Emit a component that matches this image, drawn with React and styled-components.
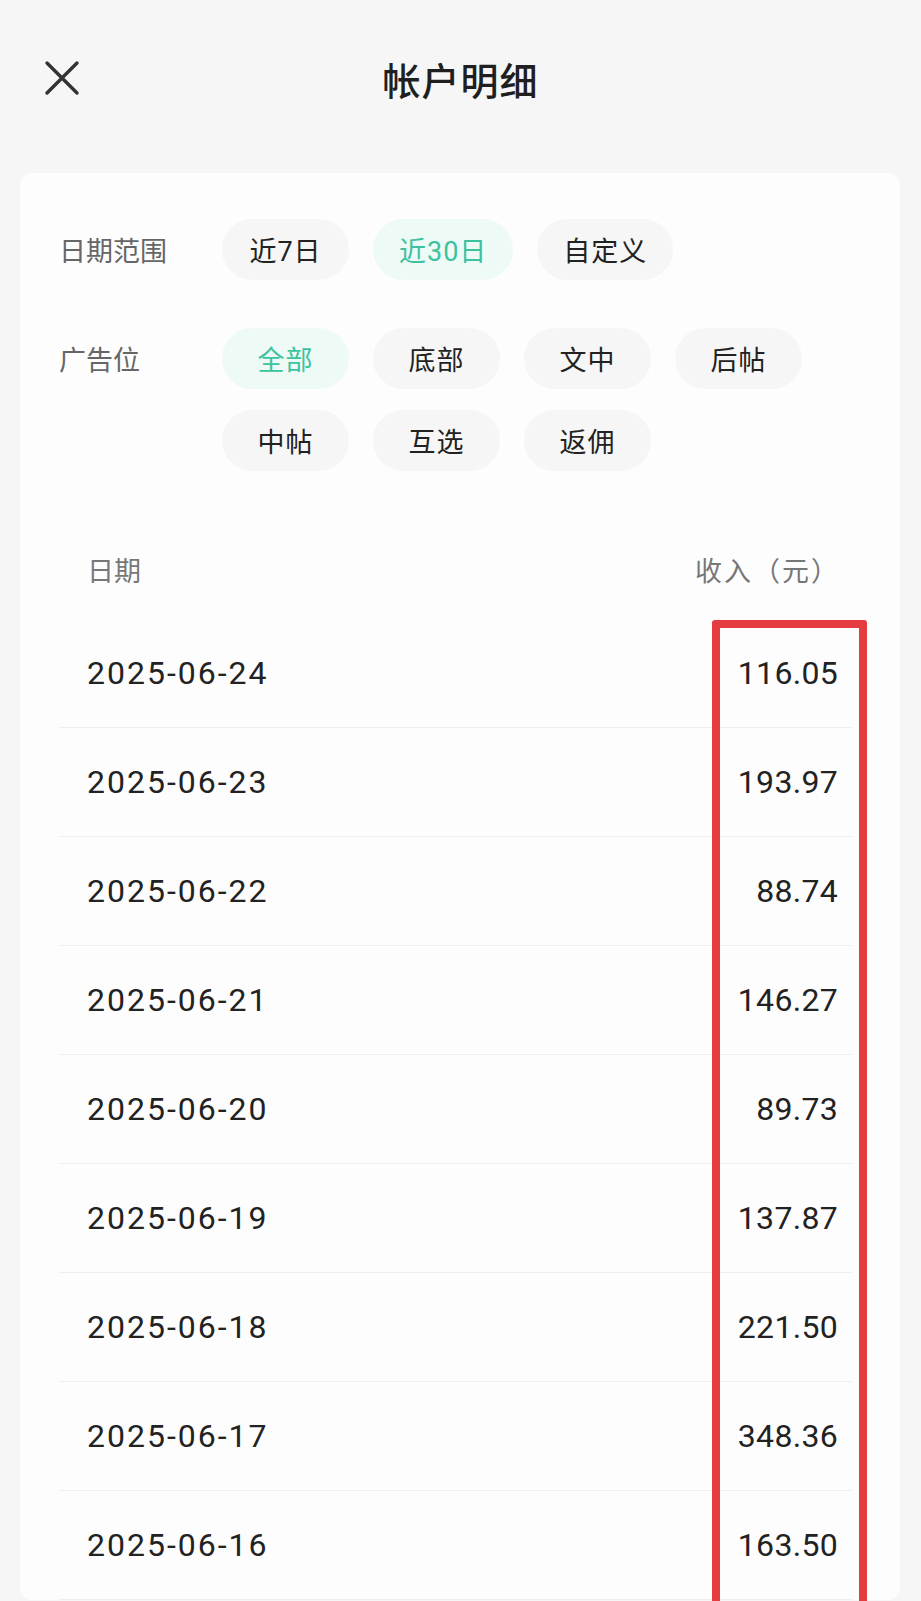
import React from 'react'
import styled, { createGlobalStyle } from 'styled-components';

const GlobalStyle = createGlobalStyle`
    html, body {
        margin: 0;
        padding: 0;
        background: #f6f6f6;
        overflow: hidden;
    }
    * {
        box-sizing: border-box;
    }
`;

const Page = styled.div`
    position: relative;
    width: 921px;
    height: 1601px;
    overflow: hidden;
    background: #f6f6f6;
    font-family: Roboto, "Noto Sans CJK SC", sans-serif;
    color: #222222;
`;
const Header = styled.div`
    position: relative;
    height: 156px;
    display: flex;
    align-items: center;
    justify-content: center;
`;
const CloseButton = styled.div`
    position: absolute;
    left: 44px;
    top: 60px;
    width: 36px;
    height: 36px;
    display: flex;
`;
const Title = styled.h1`
    margin: 0;
    font-family: "Noto Sans CJK SC", sans-serif;
    font-size: 38px;
    font-weight: 500;
    color: #1f1f1f;
    letter-spacing: 1px;
`;
const Card = styled.div`
    margin: 17px 21px 0 20px;
    background: #fdfdfd;
    border-radius: 12px;
    padding: 46px 48px 0 39px;
`;
const FilterGroup = styled.div`
    display: flex;
    align-items: flex-start;
    margin-bottom: 48px;
`;
const FilterLabel = styled.div`
    width: 163px;
    flex-shrink: 0;
    height: 61px;
    line-height: 61px;
    font-family: "Noto Sans CJK SC", sans-serif;
    font-size: 27px;
    color: #666666;
`;
const Chips = styled.div`
    display: flex;
    flex-wrap: wrap;
    gap: 21px 24px;
    width: 600px;
`;
const Chip = styled.div`
    min-width: 127px;
    height: 61px;
    padding: 0 26px;
    border-radius: 31px;
    display: flex;
    align-items: center;
    justify-content: center;
    font-size: 27px;
    letter-spacing: 1px;
    background: ${p => (p.$active ? '#edfaf6' : '#f6f6f6')};
    color: ${p => (p.$active ? '#3cc29f' : '#222222')};
`;
const Table = styled.div`
    margin-top: 3px;
`;
const HeadRow = styled.div`
    display: flex;
    justify-content: space-between;
    align-items: center;
    height: 100px;
    padding: 0 12px 0 28px;
    font-family: "Noto Sans CJK SC", sans-serif;
    font-size: 27px;
    color: #777777;
`;
const HeadCell = styled.span`
    letter-spacing: ${p => (p.$wide ? '2px' : '0')};
`;
const Row = styled.div`
    display: flex;
    justify-content: space-between;
    align-items: center;
    height: 109px;
    padding: 0 14px 0 28px;
    border-bottom: 1px solid #eeeeee;
    font-size: 32px;
    color: #222222;
`;
const DateCell = styled.span`
    letter-spacing: 2px;
`;
const Amount = styled.span`
    letter-spacing: 0.3px;
`;
const Highlight = styled.div`
    position: absolute;
    left: 712px;
    top: 620px;
    width: 155px;
    height: 1100px;
    border: 8px solid #e53d3f;
    border-radius: 3px;
    pointer-events: none;
`;

const dateOptions = [
    { label: '近7日' },
    { label: '近30日', active: true },
    { label: '自定义' },
];
const slotOptions = [
    { label: '全部', active: true },
    { label: '底部' },
    { label: '文中' },
    { label: '后帖' },
    { label: '中帖' },
    { label: '互选' },
    { label: '返佣' },
];
const records = [
    ['2025-06-24', '116.05'],
    ['2025-06-23', '193.97'],
    ['2025-06-22', '88.74'],
    ['2025-06-21', '146.27'],
    ['2025-06-20', '89.73'],
    ['2025-06-19', '137.87'],
    ['2025-06-18', '221.50'],
    ['2025-06-17', '348.36'],
    ['2025-06-16', '163.50'],
];

const CloseIcon = () => (
    <svg width="36" height="36" viewBox="0 0 36 36">
        <path d="M3 3 L33 33 M33 3 L3 33" stroke="#333" strokeWidth="3.4" strokeLinecap="round" fill="none" />
    </svg>
);

const App = () => {
    return (
        <Page>
            <GlobalStyle />
            <Header>
                <CloseButton><CloseIcon /></CloseButton>
                <Title>帐户明细</Title>
            </Header>
            <Card>
                <FilterGroup>
                    <FilterLabel>日期范围</FilterLabel>
                    <Chips>
                        {dateOptions.map(o => (
                            <Chip key={o.label} $active={o.active}>{o.label}</Chip>
                        ))}
                    </Chips>
                </FilterGroup>
                <FilterGroup>
                    <FilterLabel>广告位</FilterLabel>
                    <Chips>
                        {slotOptions.map(o => (
                            <Chip key={o.label} $active={o.active}>{o.label}</Chip>
                        ))}
                    </Chips>
                </FilterGroup>
                <Table>
                    <HeadRow>
                        <HeadCell>日期</HeadCell>
                        <HeadCell $wide>收入（元）</HeadCell>
                    </HeadRow>
                    {records.map(([date, amount]) => (
                        <Row key={date}>
                            <DateCell>{date}</DateCell>
                            <Amount>{amount}</Amount>
                        </Row>
                    ))}
                </Table>
            </Card>
            <Highlight />
        </Page>
    )
}

export default App;
